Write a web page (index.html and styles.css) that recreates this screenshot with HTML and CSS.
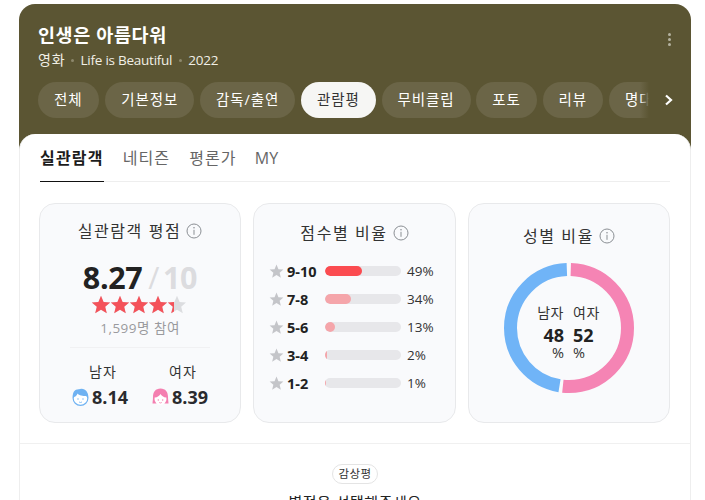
FILE: index.html
```html
<!DOCTYPE html>
<html lang="ko">
<head>
<meta charset="utf-8">
<title>인생은 아름다워</title>
<link rel="stylesheet" href="styles.css">
</head>
<body>
<svg class="defs" width="0" height="0" aria-hidden="true">
  <defs>
    <polygon id="star" points="10,0.8 12.6,6.9 19.2,7.4 14.2,11.7 15.8,18.2 10,14.7 4.2,18.2 5.8,11.7 0.8,7.4 7.4,6.9"/>
    <g id="info">
      <circle cx="8" cy="8" r="7" fill="none" stroke="#8b8f94" stroke-width="1"/>
      <circle cx="8" cy="4.8" r="0.8" fill="#8b8f94"/>
      <rect x="7.5" y="6.8" width="1" height="5" fill="#8b8f94"/>
    </g>
  </defs>
</svg>
<main class="app">
  <header class="head">
    <div class="head-top">
      <div>
        <h1 class="title">인생은 아름다워</h1>
        <p class="meta"><span>영화</span><i class="dot"></i><span>Life is Beautiful</span><i class="dot"></i><span>2022</span></p>
      </div>
      <div class="kebab"><i></i><i></i><i></i></div>
    </div>
    <nav class="pills-wrap">
      <div class="pills">
        <a class="pill">전체</a>
        <a class="pill">기본정보</a>
        <a class="pill">감독/출연</a>
        <a class="pill active">관람평</a>
        <a class="pill">무비클립</a>
        <a class="pill">포토</a>
        <a class="pill">리뷰</a>
        <a class="pill">명대사</a>
      </div>
      <svg class="chev" width="10" height="12" viewBox="0 0 10 12"><path d="M2 1.5 L7 6 L2 10.5" fill="none" stroke="#fff" stroke-width="2.2"/></svg>
    </nav>
  </header>
  <section class="body">
    <div class="tabs">
      <a class="tab on">실관람객</a>
      <a class="tab">네티즌</a>
      <a class="tab">평론가</a>
      <a class="tab latin">MY</a>
    </div>
    <div class="cards">
      <article class="card">
        <h2 class="card-title">실관람객 평점 <svg class="info" width="16" height="16" viewBox="0 0 16 16"><use href="#info"/></svg></h2>
        <div class="score"><b>8.27</b><span class="slash">/</span><span>10</span></div>
        <svg class="stars" width="95" height="19" viewBox="0 0 95 19">
          <defs><clipPath id="fillclip"><rect width="83" height="19"/></clipPath></defs>
          <g fill="#dcdde0">
            <use href="#star"/><use href="#star" x="19"/><use href="#star" x="38"/><use href="#star" x="57"/><use href="#star" x="76"/>
          </g>
          <g fill="#f4525a" clip-path="url(#fillclip)">
            <use href="#star"/><use href="#star" x="19"/><use href="#star" x="38"/><use href="#star" x="57"/><use href="#star" x="76"/>
          </g>
        </svg>
        <p class="count">1,599명 참여</p>
        <div class="genders">
          <div class="gender">
            <span class="g-label">남자</span>
            <span class="g-val">
              <svg width="17" height="18" viewBox="0 0 17 18"><circle cx="8.5" cy="10" r="7.4" fill="#fff" stroke="#6fb2f2" stroke-width="1.2"/><path d="M1 10 C0 4 3 1 7 1.2 C9 0 14 0.5 15.5 5 C16.5 7 16.2 9 16 10.5 L14.2 8 C11 8 7 7.5 5.5 5.5 C5 7.5 3.5 8.5 2.6 8.8 Z" fill="#6fb2f2"/><circle cx="6" cy="11" r=".7" fill="#6fb2f2"/><circle cx="11" cy="11" r=".7" fill="#6fb2f2"/><path d="M7 14 Q8.5 15 10 14" fill="none" stroke="#6fb2f2" stroke-width=".8"/></svg>
              8.14
            </span>
          </div>
          <div class="gender">
            <span class="g-label">여자</span>
            <span class="g-val">
              <svg width="17" height="18" viewBox="0 0 17 18"><path d="M8.5 0.5 C3.5 0.5 1 4 1 9 C1 12 0.5 14 0.5 15.5 L16.5 15.5 C16.5 14 16 12 16 9 C16 4 13.5 0.5 8.5 0.5 Z" fill="#f47fb0"/><circle cx="8.5" cy="11" r="6" fill="#fff"/><path d="M2.8 9.5 C5.5 9.5 7.5 7.5 8.5 6 C9.5 7.5 11.5 9.5 14.2 9.5 L14 4 L3 4 Z" fill="#f47fb0"/><circle cx="6.3" cy="12" r=".7" fill="#f47fb0"/><circle cx="10.7" cy="12" r=".7" fill="#f47fb0"/><path d="M7.2 14.5 Q8.5 15.4 9.8 14.5" fill="none" stroke="#f47fb0" stroke-width=".8"/></svg>
              8.39
            </span>
          </div>
        </div>
      </article>
      <article class="card">
        <h2 class="card-title mid-title">점수별 비율 <svg class="info" width="16" height="16" viewBox="0 0 16 16"><use href="#info"/></svg></h2>
        <ul class="rows">
          <li class="row"><svg width="15" height="15" viewBox="0 0 20 20" fill="#c4c5c9"><use href="#star"/></svg><b class="range">9-10</b><span class="track"><span class="fill high" style="width:37px"></span></span><span class="pct">49%</span></li>
          <li class="row"><svg width="15" height="15" viewBox="0 0 20 20" fill="#c4c5c9"><use href="#star"/></svg><b class="range">7-8</b><span class="track"><span class="fill" style="width:26px"></span></span><span class="pct">34%</span></li>
          <li class="row"><svg width="15" height="15" viewBox="0 0 20 20" fill="#c4c5c9"><use href="#star"/></svg><b class="range">5-6</b><span class="track"><span class="fill" style="width:10px"></span></span><span class="pct">13%</span></li>
          <li class="row"><svg width="15" height="15" viewBox="0 0 20 20" fill="#c4c5c9"><use href="#star"/></svg><b class="range">3-4</b><span class="track"><span class="fill" style="width:2px"></span></span><span class="pct">2%</span></li>
          <li class="row"><svg width="15" height="15" viewBox="0 0 20 20" fill="#c4c5c9"><use href="#star"/></svg><b class="range">1-2</b><span class="track"><span class="fill" style="width:1px"></span></span><span class="pct">1%</span></li>
        </ul>
      </article>
      <article class="card">
        <h2 class="card-title donut-title">성별 비율 <svg class="info" width="16" height="16" viewBox="0 0 16 16"><use href="#info"/></svg></h2>
        <div class="donut">
          <svg width="130" height="130" viewBox="0 0 130 130">
            <g fill="none" stroke-width="13" transform="rotate(-90 65 65)">
              <circle cx="65" cy="65" r="58.5" stroke="#f584b4" pathLength="100" stroke-dasharray="51.2 48.8" stroke-dashoffset="-0.5"/>
              <circle cx="65" cy="65" r="58.5" stroke="#70b4f7" pathLength="100" stroke-dasharray="46.8 53.2" stroke-dashoffset="-52.6"/>
            </g>
          </svg>
          <div class="donut-text">
            <div class="d-col left"><span class="d-label">남자</span><b class="d-num">48</b><span class="d-pct">%</span></div>
            <div class="d-col"><span class="d-label">여자</span><b class="d-num">52</b><span class="d-pct">%</span></div>
          </div>
        </div>
      </article>
    </div>
    <div class="review">
      <span class="badge">감상평</span>
      <p class="prompt">별점을 선택해주세요</p>
    </div>
  </section>
</main>
</body>
</html>
```
FILE: styles.css
```css
* { box-sizing: border-box; }
html, body { height: 500px; overflow: hidden; }
body {
  margin: 0;
  padding-top: 4px;
  background: #fff;
  color: #222;
  font-family: "Open Sans", "Noto Sans CJK KR", sans-serif;
}
.defs { position: absolute; }
h1, h2, p, ul { margin: 0; padding: 0; list-style: none; }

.app { width: 672px; margin-left: 19px; background: #5b5533; border-radius: 16px 16px 0 0; }

.head { padding: 18px 19px 16px; height: 130px; }
.head-top { display: flex; justify-content: space-between; align-items: flex-start; height: 60px; }
.title { font-size: 18.5px; line-height: 26px; font-weight: 700; color: #fff; letter-spacing: 0.6px; }
.meta { display: flex; align-items: center; font-size: 13.5px; line-height: 22px; color: #f1efe6; margin-top: 1px; letter-spacing: -0.25px; }
.meta span:first-child { font-size: 14px; letter-spacing: 0.9px; margin-right: -1px; }
.dot { width: 3px; height: 3px; border-radius: 50%; background: #8d886c; margin: 0 6.5px; }
.kebab { display: flex; flex-direction: column; gap: 2px; margin: 11px 1px 0 0; }
.kebab i { display: block; width: 3px; height: 3px; border-radius: 50%; background: #b5b2a0; }

.pills-wrap { position: relative; display: flex; align-items: center; height: 36px; margin-right: -5px; }
.pills { display: flex; gap: 5.8px; width: 615px; overflow: hidden; flex: none; }
.pills-wrap::after {
  content: "";
  position: absolute;
  left: 602px;
  top: 0;
  width: 13px;
  height: 36px;
  background: linear-gradient(90deg, rgba(91,85,51,0), #5b5533 70%);
}
.pill {
  flex: none;
  height: 36px;
  padding: 0 16px;
  border-radius: 18px;
  background: #6b6547;
  color: #fff;
  font-size: 14.5px;
  letter-spacing: 0.9px;
  line-height: 36px;
  white-space: nowrap;
}
.pill:first-child { padding-right: 17px; }
.pill.active { background: #f6f6f4; color: #333; }
.chev { margin-left: 11px; flex: none; }

.body { background: #fff; border-radius: 16px 16px 0 0; border: 1px solid #eeeeee; border-top: 0; border-bottom: 0; height: 366px; padding: 0 20px; overflow: hidden; }

.tabs { display: flex; gap: 19px; height: 48px; border-bottom: 1px solid #eeeeee; }
.tab { font-size: 16px; line-height: 48px; color: #666; height: 48px; letter-spacing: 1.1px; }
.tab.latin { letter-spacing: 0.2px; margin-left: -1px; }
.tab.on { color: #1c1c1c; font-weight: 700; border-bottom: 1px solid #111; letter-spacing: 1.2px; }

.cards { display: grid; grid-template-columns: 202px 203px 202px; gap: 12px; margin: 21px 0 0 -1px; width: 631px; }
.card { height: 220px; background: #f9fafc; border: 1px solid #e8e9eb; border-radius: 16px; display: flex; flex-direction: column; align-items: center; }
.card-title { display: flex; align-items: center; gap: 5px; font-size: 16px; font-weight: 400; line-height: 24px; color: #333; margin-top: 15px; letter-spacing: 1.6px; }
.mid-title { margin-top: 17px; }
.donut-title { margin-top: 20px; }
.info { flex: none; }

.score { margin-top: 17px; font-size: 30.5px; line-height: 34px; display: flex; align-items: baseline; letter-spacing: -0.4px; }
.score b { color: #222; font-weight: 700; }
.score span { color: #dcdcdf; font-weight: 700; }
.score .slash { font-weight: 400; margin: 0 4px 0 6px; }
.stars { margin: 1px 3px 0 0; display: block; }
.count { margin-top: 4px; font-size: 13.5px; line-height: 20px; color: #9a9a9e; letter-spacing: 0.5px; }

.genders { display: grid; grid-template-columns: 80px 80px; justify-content: center; width: 140px; margin-top: 9px; border-top: 1px solid #f1f1f3; padding-top: 13px; }
.gender { display: flex; flex-direction: column; align-items: center; gap: 3px; }
.g-label { font-size: 14px; line-height: 21px; color: #333; letter-spacing: 1px; margin-left: 6px; }
.g-val { display: flex; align-items: center; gap: 3px; font-size: 18px; line-height: 24px; font-weight: 700; color: #2a2a2e; }

.rows { width: 171px; margin-top: 16px; display: flex; flex-direction: column; gap: 8px; }
.row { display: flex; align-items: center; height: 20px; }
.range { width: 38px; margin-left: 3px; font-size: 14.5px; color: #222; }
.track { width: 76px; height: 10px; border-radius: 5px; background: #e7e7ea; overflow: hidden; }
.fill { display: block; height: 10px; border-radius: 5px; background: #f5a5aa; }
.fill.high { background: #fb4b50; }
.pct { margin-left: 6px; font-size: 13.5px; color: #333; }

.donut { position: relative; width: 130px; height: 130px; margin-top: 15px; }
.donut svg { display: block; }
.donut-text { position: absolute; left: 33px; top: 39px; display: flex; gap: 9px; width: 71px; }
.d-col { width: 27px; display: flex; flex-direction: column; align-items: flex-start; }
.d-col.left { align-items: flex-end; }
.d-label { font-size: 14px; line-height: 22px; color: #333; white-space: nowrap; letter-spacing: 0.5px; }
.d-num { font-size: 18px; line-height: 23px; color: #222; }
.d-pct { font-size: 14.5px; line-height: 12px; color: #333; }

.review { margin: 20px -20px 0; border-top: 1px solid #f0f0f0; padding-top: 20px; display: flex; flex-direction: column; align-items: center; }
.badge { height: 20px; padding: 0 5.5px; border: 1px solid #e4e4e4; border-radius: 10px; font-size: 11.5px; letter-spacing: 0.4px; line-height: 18px; color: #333; }
.prompt { margin-top: 6px; font-size: 15px; line-height: 24px; color: #222; letter-spacing: 0.5px; }
```
